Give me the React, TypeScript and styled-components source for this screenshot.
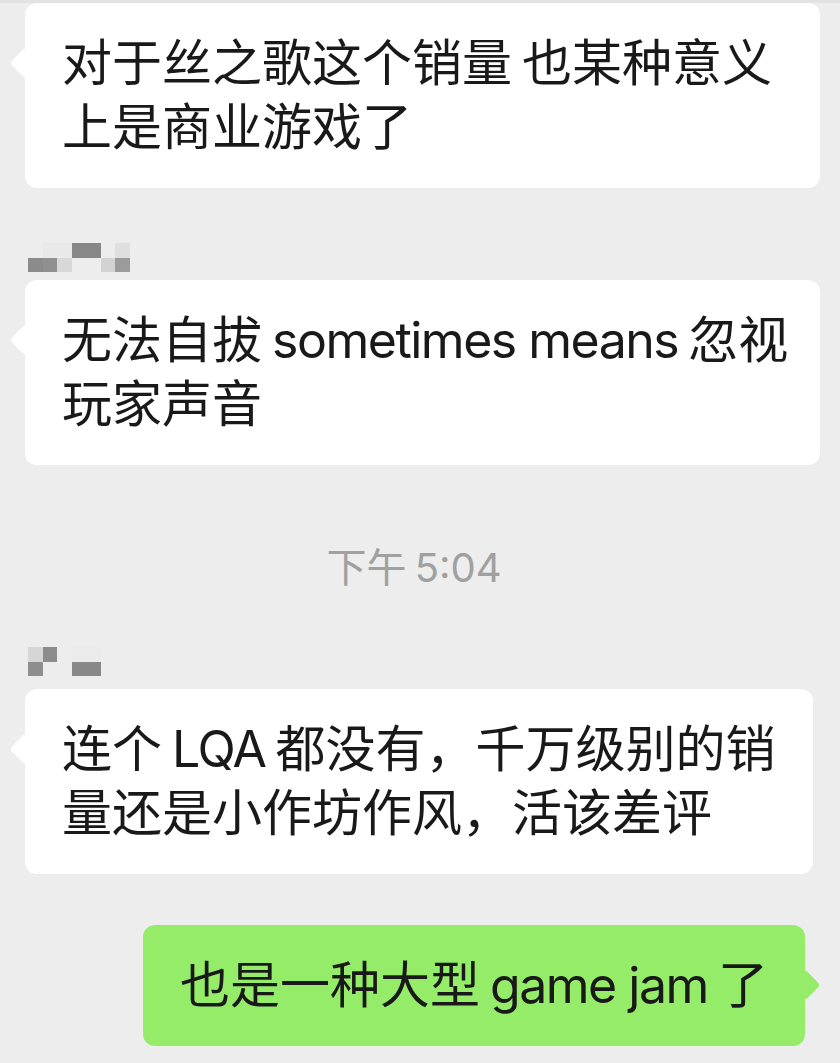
import React from "react";
import styled, { createGlobalStyle } from "styled-components";

const GlobalStyle = createGlobalStyle`
  html, body {
    margin: 0;
    padding: 0;
    background: #ededed;
  }
  body {
    font-family: "Inter", "Noto Sans CJK SC", sans-serif;
    -webkit-font-smoothing: antialiased;
  }
`;

const Chat = styled.div`
  width: 840px;
  height: 1063px;
  overflow: hidden;
  background: #ededed;
  display: flex;
  flex-direction: column;
`;

const TopEdge = styled.div`
  height: 3px;
  background: #e2e2e2;
`;

const Row = styled.div<{ $mine?: boolean; $mt: number }>`
  display: flex;
  justify-content: ${(p) => (p.$mine ? "flex-end" : "flex-start")};
  padding: 0 ${(p) => (p.$mine ? "35px" : "0")} 0 ${(p) => (p.$mine ? "0" : "25px")};
  margin-top: ${(p) => p.$mt}px;
`;

const Bubble = styled.div<{ $mine?: boolean; $w: number }>`
  position: relative;
  box-sizing: border-box;
  width: ${(p) => p.$w}px;
  padding: 28px 38px 29px 37px;
  border-radius: 12px;
  background: ${(p) => (p.$mine ? "#95ec69" : "#ffffff")};
  color: #191919;
  font-size: 50px;
  line-height: 64px;

  &::before {
    content: "";
    position: absolute;
    top: 49px;
    ${(p) => (p.$mine ? "right: -11px;" : "left: -11px;")}
    width: 22px;
    height: 22px;
    border-radius: 4px;
    background: inherit;
    transform: rotate(45deg);
  }
`;

const Line = styled.div`
  position: relative;
  white-space: nowrap;
  word-spacing: -4px;
`;

const Latin = styled.span`
  letter-spacing: -0.03em;
  word-spacing: 0;
`;

const Stamp = styled.div<{ $mt: number }>`
  margin-top: ${(p) => p.$mt}px;
  padding-right: 12px;
  text-align: center;
  font-size: 40px;
  line-height: 56px;
  word-spacing: -3px;
  color: #a0a0a0;
`;

const Mosaic = styled.div<{ $mt: number; $cols: number }>`
  display: grid;
  grid-template-columns: repeat(${(p) => p.$cols}, 14.5px);
  grid-auto-rows: 14.5px;
  margin: ${(p) => p.$mt}px 0 0 28px;
`;

const Cell = styled.div<{ $c: string }>`
  background: ${(p) => p.$c};
`;

const _ = "transparent";

const nameA = [
  [_, "#e9e9e9", "#e9e9e9", "#878787", "#878787", _, "#dfdfdf"],
  ["#8b8b8b", "#909090", "#d8d8d8", _, _, "#d3d3d3", "#9b9b9b"],
];

const nameB = [
  ["#d6d6d6", "#8c8c8c", _, "#ebebeb", "#ebebeb"],
  ["#8e8e8e", _, _, "#888888", "#888888"],
];

const Name: React.FC<{ grid: string[][]; mt: number }> = ({ grid, mt }) => (
  <Mosaic $mt={mt} $cols={grid[0].length}>
    {grid.flat().map((c, i) => (
      <Cell key={i} $c={c} />
    ))}
  </Mosaic>
);

export default function App() {
  return (
    <Chat>
      <GlobalStyle />
      <TopEdge />

      <Row $mt={0}>
        <Bubble $w={795}>
          <Line>对于丝之歌这个销量 也某种意义</Line>
          <Line>上是商业游戏了</Line>
        </Bubble>
      </Row>

      <Name grid={nameA} mt={55} />
      <Row $mt={8}>
        <Bubble $w={795}>
          <Line>
            无法自拔 <Latin>sometimes means</Latin> 忽视
          </Line>
          <Line>玩家声音</Line>
        </Bubble>
      </Row>

      <Stamp $mt={75}>下午 5:04</Stamp>

      <Name grid={nameB} mt={51} />
      <Row $mt={13}>
        <Bubble $w={788}>
          <Line>
            连个 <Latin>LQA</Latin> 都没有，千万级别的销
          </Line>
          <Line>量还是小作坊作风，活该差评</Line>
        </Bubble>
      </Row>

      <Row $mine $mt={51}>
        <Bubble $mine $w={662}>
          <Line>
            也是一种大型 <Latin>game jam</Latin> 了
          </Line>
        </Bubble>
      </Row>
    </Chat>
  );
}
